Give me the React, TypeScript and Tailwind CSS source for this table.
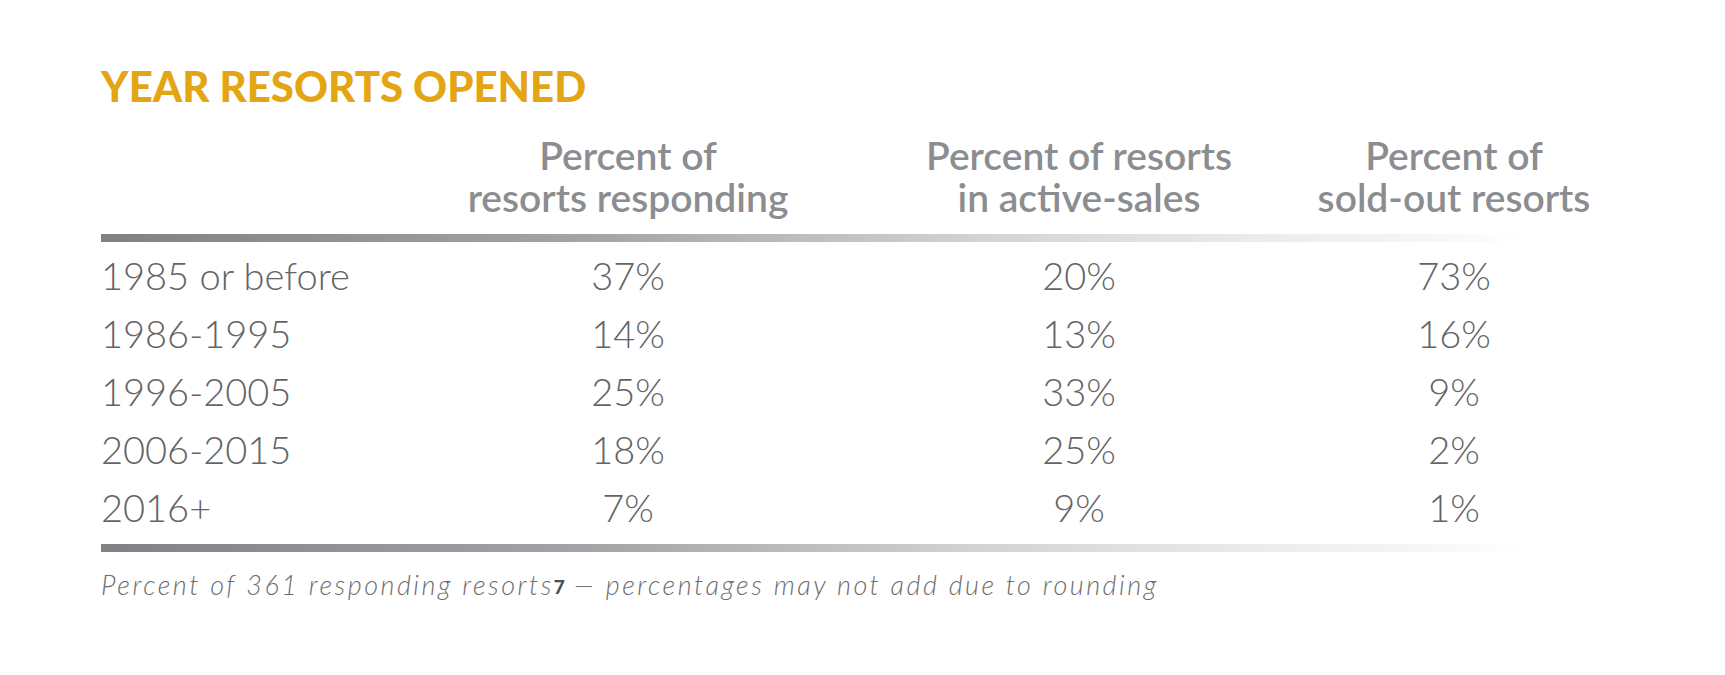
import React from "react";

interface Row {
  label: string;
  responding: string;
  active: string;
  soldOut: string;
}

const rows: Row[] = [
  { label: "1985 or before", responding: "37%", active: "20%", soldOut: "73%" },
  { label: "1986-1995", responding: "14%", active: "13%", soldOut: "16%" },
  { label: "1996-2005", responding: "25%", active: "33%", soldOut: "9%" },
  { label: "2006-2015", responding: "18%", active: "25%", soldOut: "2%" },
  { label: "2016+", responding: "7%", active: "9%", soldOut: "1%" },
];

const cols = "grid grid-cols-[302px_450px_452px_298px]";

const Rule = () => (
  <div className="h-[8px] w-[1422px] bg-[linear-gradient(to_right,#7f8185,#a3a5a8_35%,#d2d3d4_62%,#ececec_82%,#f6f6f6_93%,#ffffff)]" />
);

const App: React.FC = () => {
  return (
    <div className="w-[1725px] h-[675px] bg-white pl-[101px] pt-[65px] font-['Lato',sans-serif]">
      <h1 className="text-[42px] leading-[42px] font-black text-[#e4a514]">
        YEAR RESORTS OPENED
      </h1>

      {/* Column headings */}
      <div className={`${cols} mt-[27px] text-[39px] leading-[42px] font-semibold text-[#8b8d90] text-center`}>
        <div />
        <div>
          Percent of
          <br />
          resorts responding
        </div>
        <div>
          Percent of resorts
          <br />
          in active-sales
        </div>
        <div>
          Percent of
          <br />
          sold-out resorts
        </div>
      </div>

      <div className="mt-[16px]">
        <Rule />
      </div>

      <div className="pt-[4px] pb-[8px]">
        {rows.map((row) => (
          <div
            key={row.label}
            className={`${cols} text-[38px] leading-[58px] font-light text-[#636467]`}
          >
            <div>{row.label}</div>
            <div className="text-center">{row.responding}</div>
            <div className="text-center">{row.active}</div>
            <div className="text-center">{row.soldOut}</div>
          </div>
        ))}
      </div>

      <Rule />

      <p className="mt-[18px] text-[27px] leading-[30px] font-light italic tracking-[2.5px] text-[#6d6e71]">
        Percent of 361 responding resorts
        <sup className="text-[19px] font-black not-italic tracking-normal text-[#4d4e50] relative -top-[1px]">7</sup>{" "}
        — percentages may not add due to rounding
      </p>
    </div>
  );
};

export default App;
